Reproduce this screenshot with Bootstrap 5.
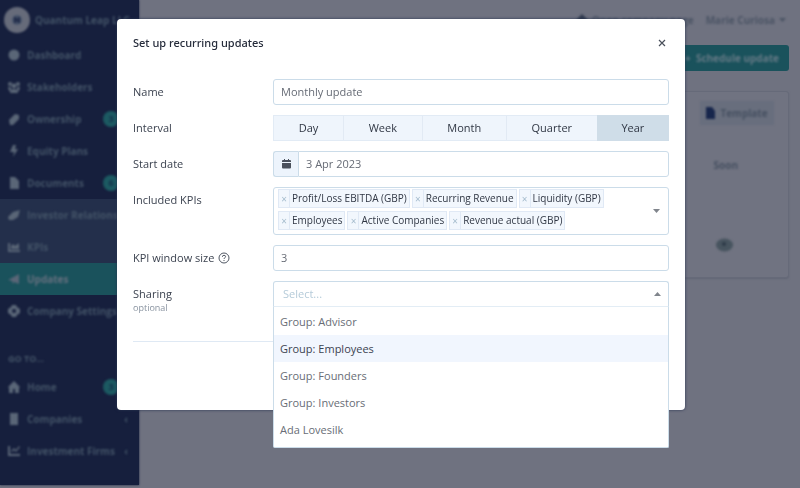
<!DOCTYPE html>
<html lang="en">
<head>
<meta charset="utf-8">
<meta name="viewport" content="width=device-width, initial-scale=1">
<title>Set up recurring updates</title>
<link href="https://cdn.jsdelivr.net/npm/bootstrap@5.3.0/dist/css/bootstrap.min.css" rel="stylesheet">
<style>
body{font-family:"Open Sans","Noto Sans",sans-serif;font-size:11px;line-height:16px;color:#3c4350;background:#6f7280;overflow:hidden}
svg{display:block;flex:none}
/* dimmed application behind the dialog */
.app-shell{min-height:100vh;font-size:10px;font-weight:700;padding-bottom:3px}
.side{width:139px;flex:none;background:#161f3d;color:#435367;box-shadow:0 0 2px #161f3d}
.side-brand{height:39px;padding-left:4px;gap:5px;white-space:nowrap}
.brand-logo{width:26px;height:26px;background:#666b7a}
.side-link{height:32px;padding-left:8px;gap:7px;color:#435367;text-decoration:none;white-space:nowrap}
.side-link span,.side-brand span,.side-head,.soft{filter:blur(1px)}
.side-link svg{width:12px;height:12px;fill:#5a6677;filter:blur(1px)}
.side-group{background:#232f4b}
.side-link.current{background:#1a525c;color:#66707f}
.side-link .pill{width:16px;height:16px;margin-left:auto;margin-right:20px;background:#1c5a62;color:#15304a;font-size:9px;text-align:center}
.side-link .caret{margin-left:auto;margin-right:11px}
.side-head{height:26px;padding:6px 8px 0;font-size:9px;margin-top:18px}
.main-pane{padding-right:11px}
.top-row{height:40px;padding-right:3px;gap:12px;color:#4b5464}
.go-btn{height:26px;width:130px;margin-top:5px;padding:0 10px 0 0;background:#1a525c;color:#667a86;border:0;border-radius:3px;font-size:10px;font-weight:700}
.list-box{width:190px;height:187px;margin-top:20px;border:1px solid #666a79;border-radius:3px;background:#707381;padding:9px 14px;color:#465061;box-shadow:0 1px 2px #626675}
.tpl-btn{width:74px;height:24px;border:0;background:#686e7d;color:#465061;font-size:10px;font-weight:700;gap:5px}
.when{margin:32px 36px 0 0}
.view-eye{margin:auto 41px 16px 0}
/* dialog */
.dlg-wrap{padding:19px 115px 0 117px}
.dlg{max-width:568px;background:#fff;border-radius:4px;box-shadow:0 0 3px #2a3350;min-height:391px}
.dlg-top{height:48px;padding:0 16px;color:#252b3a}
.dlg-top h1{font-family:"Noto Sans",sans-serif;font-size:11px;line-height:16px;font-weight:500}
.x-btn{border:0;background:none;padding:4px;margin-right:-1px}
.dlg-form{padding:12px 16px 0;gap:10px}
.f-label{width:140px;flex:none;padding-top:5px;color:#3c4350}
.f-ctl{flex:1 1 0;min-width:0}
.box{width:100%;height:26px;border:1px solid #cbdce9;border-radius:3px;background:#fff;color:#666b75;padding:0 7px 2px;font-size:11px;outline:0}
.box::placeholder{color:#b5cbd9;opacity:1}
.seg{height:26px;background:#eff5fc;border:1px solid #e2ebf5}
.seg button{flex:1 1 auto;border:0;border-right:1px solid #e2eaf4;background:none;color:#303744;padding:0}
.seg button.on{background:#cfdde8;border:0;margin:-1px}
.cal{width:25px;background:#edf4fc;border:1px solid #cbdce9;border-radius:3px 0 0 3px;border-right:0}
.cal+.box{border-radius:0 3px 3px 0}
.tags{min-height:48px;border:1px solid #cbdce9;border-radius:3px;padding:1px 4px;position:relative}
.tag-list{gap:3px 2px;padding-right:24px}
.kpi{height:19px;border:1px solid #e0e9f5;background:#f2f7fd;font-size:10px;line-height:17px;color:#303744;padding-right:2px}
.kpi button{width:11px;height:17px;border:0;border-right:1px solid #e0e9f5;background:none;color:#a5bccd;font-size:10px;line-height:16px;padding:0;margin-right:2px}
.arrow{position:absolute;right:8px;top:50%;margin-top:-2px}
.opt-note{font-size:9px;line-height:12px;color:#8993a0}
.pick{position:relative}
.pick .box{padding-left:9px;border-radius:3px 3px 0 0;border-bottom-color:#e3edf5}
.menu{position:absolute;top:26px;left:0;right:0;background:#fff;border:1px solid #cbdce9;border-top:0;padding:1px 0 4px;border-radius:0 0 2px 2px;list-style:none;margin:0}
.menu li{height:27px;line-height:27px;padding-left:6px;color:#686d76}
.menu li.over{background:#f1f6fe;color:#3c4350}
.rule{border-top:1px solid #dfe9f4;margin-top:17px}
</style>
</head>
<body>
<div class="app-shell d-flex" aria-hidden="true">
  <nav class="side">
    <div class="side-brand d-flex align-items-center">
      <div class="brand-logo soft rounded-circle d-flex align-items-center justify-content-center"><svg width="12" height="12" viewBox="0 0 12 12"><circle cx="6" cy="6" r="5" fill="#46536a"/><path d="M4 3v6M4 4l4 4M8 3v6" stroke="#202b49" stroke-width="2"/></svg></div>
      <span>Quantum Leap LLC</span>
    </div>
    <a href="#" class="side-link d-flex align-items-center"><svg viewBox="0 0 12 12"><circle cx="6" cy="6" r="5.5"/></svg><span>Dashboard</span></a>
    <a href="#" class="side-link d-flex align-items-center"><svg viewBox="0 0 12 12"><circle cx="2" cy="3" r="2"/><circle cx="10" cy="3" r="2"/><circle cx="6" cy="5" r="2.4"/><path d="M0 6h3v4H1zM9 6h3l-1 4H9zM2 12q0-4 4-4t4 4z"/></svg><span>Stakeholders</span></a>
    <a href="#" class="side-link d-flex align-items-center"><svg viewBox="0 0 12 12"><path d="M1 7l6-6 4 1v4l-6 6H2z"/></svg><span>Ownership</span><span class="pill rounded-circle">3</span></a>
    <a href="#" class="side-link d-flex align-items-center"><svg viewBox="0 0 12 12"><path d="M5 0h3L7 4h3L5 12l1-5H2z"/></svg><span>Equity Plans</span></a>
    <a href="#" class="side-link d-flex align-items-center"><svg viewBox="0 0 12 12"><path d="M2 0h5l4 4v8H2z"/></svg><span>Documents</span><span class="pill rounded-circle">6</span></a>
    <div class="side-group">
      <a href="#" class="side-link d-flex align-items-center"><svg viewBox="0 0 12 12"><path d="M0 8l5-5 7-2-2 7-5 3H1z"/></svg><span>Investor Relations</span></a>
      <a href="#" class="side-link d-flex align-items-center"><svg viewBox="0 0 12 12"><path d="M0 2h2v7h10v2H0zM3 8V5l2-2 2 2 4-3v6z"/></svg><span>KPIs</span></a>
    </div>
    <a href="#" class="side-link current d-flex align-items-center"><svg viewBox="0 0 12 12"><path d="M0 7L11 1v10L6 9l-1 2-1-3z"/></svg><span>Updates</span></a>
    <a href="#" class="side-link d-flex align-items-center"><svg viewBox="0 0 12 12"><path fill-rule="evenodd" d="M4 0h4l1 2 3 2v4l-3 2-1 2H4l-1-2-3-2V4l3-2zM6 4a2 2 0 1 0 .1 0z"/></svg><span>Company Settings</span></a>
    <div class="side-head">GO TO...</div>
    <a href="#" class="side-link d-flex align-items-center"><svg viewBox="0 0 12 12"><path d="M6 0l6 6-1 1v5H7V8H5v4H1V7L0 6z"/></svg><span>Home</span><span class="pill rounded-circle">3</span></a>
    <a href="#" class="side-link d-flex align-items-center"><svg viewBox="0 0 12 12"><path d="M2 0h8v12H2z"/></svg><span>Companies</span><span class="caret">‹</span></a>
    <a href="#" class="side-link d-flex align-items-center"><svg viewBox="0 0 12 12"><path d="M0 1h2v8h10v2H0zM3 6l3-3 2 2 3-4 1 1-4 5-2-2-2 2z"/></svg><span>Investment Firms</span><span class="caret">‹</span></a>
  </nav>
  <main class="main-pane flex-fill d-flex flex-column align-items-end">
    <div class="top-row d-flex align-items-center soft">
      <div class="d-flex align-items-center gap-1"><svg width="12" height="12" viewBox="0 0 12 12"><path d="M6 0l6 6-1 1v5H1V7L0 6z" fill="#303a4e"/></svg><span>Open company page</span></div>
      <div class="d-flex align-items-center gap-1"><span>Marie Curiosa</span><svg width="7" height="4" viewBox="0 0 7 4"><path d="M0 0h7L3.500 4z" fill="#4b5464"/></svg></div>
    </div>
    <button type="button" class="go-btn text-end" tabindex="-1"><span class="soft d-inline-block">+&nbsp; Schedule update</span></button>
    <div class="list-box d-flex flex-column align-items-end">
      <button type="button" class="tpl-btn soft d-flex align-items-center justify-content-center p-0" tabindex="-1"><svg width="9" height="12" viewBox="0 0 9 12"><path d="M0 0h6l3 4v8H0z" fill="#17264c"/></svg>Template</button>
      <div class="soft when">Soon</div>
      <svg class="soft view-eye" width="17" height="14" viewBox="0 0 17 14"><ellipse cx="8.500" cy="7" rx="8.500" ry="6.500" fill="#47545f"/><circle cx="8" cy="6" r="2" fill="#2d3947"/></svg>
    </div>
  </main>
</div>

<div class="dlg-wrap position-fixed top-0 start-0 end-0">
  <div class="dlg" role="dialog" aria-modal="true" aria-labelledby="dlg-title">
    <div class="dlg-top d-flex align-items-center justify-content-between">
      <h1 id="dlg-title" class="m-0">Set up recurring updates</h1>
      <button type="button" class="x-btn" aria-label="Close"><svg width="8" height="8" viewBox="0 0 8 8"><path d="M1 1l6 6M7 1L1 7" stroke="#4a505b" stroke-width="1.200"/></svg></button>
    </div>
    <form class="dlg-form d-flex flex-column">
      <div class="d-flex">
        <label class="f-label" for="name">Name</label>
        <div class="f-ctl"><input class="box" id="name" type="text" value="Monthly update"></div>
      </div>
      <div class="d-flex">
        <div class="f-label" id="interval">Interval</div>
        <div class="f-ctl seg d-flex" role="group" aria-labelledby="interval">
          <button type="button">Day</button><button type="button">Week</button><button type="button">Month</button><button type="button">Quarter</button><button type="button" class="on" aria-pressed="true">Year</button>
        </div>
      </div>
      <div class="d-flex">
        <label class="f-label" for="start">Start date</label>
        <div class="f-ctl d-flex">
          <div class="cal d-flex align-items-center justify-content-center flex-shrink-0"><svg width="9" height="10" viewBox="0 0 9 10"><path d="M2 0h1v1h3V0h1v1h1q1 0 1 1v1H0V2q0-1 1-1h1zM0 4h9v4.500q0 1-1 1H1q-1 0-1-1z" fill="#4a505b"/></svg></div>
          <input class="box" id="start" type="text" value="3 Apr 2023">
        </div>
      </div>
      <div class="d-flex">
        <div class="f-label">Included KPIs</div>
        <div class="f-ctl tags">
          <div class="tag-list d-flex flex-wrap">
            <div class="kpi d-flex"><button type="button" aria-label="Remove">×</button>Profit/Loss EBITDA (GBP)</div>
            <div class="kpi d-flex"><button type="button" aria-label="Remove">×</button>Recurring Revenue</div>
            <div class="kpi d-flex"><button type="button" aria-label="Remove">×</button>Liquidity (GBP)</div>
            <div class="kpi d-flex"><button type="button" aria-label="Remove">×</button>Employees</div>
            <div class="kpi d-flex"><button type="button" aria-label="Remove">×</button>Active Companies</div>
            <div class="kpi d-flex"><button type="button" aria-label="Remove">×</button>Revenue actual (GBP)</div>
          </div>
          <svg class="arrow" width="7" height="4" viewBox="0 0 7 4"><path d="M0 0h7L3.500 4z" fill="#80858c"/></svg>
        </div>
      </div>
      <div class="d-flex">
        <label class="f-label d-flex align-items-center gap-1 p-0" for="window">KPI window size
          <svg width="12" height="12" viewBox="0 0 12 12" fill="none" stroke="#505763"><circle cx="6" cy="6" r="5"/><path d="M4.400 4.800q0-1.500 1.600-1.500t1.600 1.300q0 .8-.8 1.200T6 7M6 8v1"/></svg></label>
        <div class="f-ctl"><input class="box" id="window" type="text" value="3"></div>
      </div>
      <div class="d-flex align-items-start">
        <label class="f-label" for="share">Sharing<small class="opt-note d-block">optional</small></label>
        <div class="f-ctl pick">
          <input class="box d-block" id="share" type="text" placeholder="Select..." role="combobox" aria-expanded="true" aria-controls="share-list">
          <svg class="arrow" width="7" height="4" viewBox="0 0 7 4"><path d="M0 4h7L3.500 0z" fill="#80858c"/></svg>
          <ul class="menu" id="share-list" role="listbox">
            <li role="option">Group: Advisor</li>
            <li role="option" class="over" aria-selected="true">Group: Employees</li>
            <li role="option">Group: Founders</li>
            <li role="option">Group: Investors</li>
            <li role="option">Ada Lovesilk</li>
          </ul>
        </div>
      </div>
      <div class="rule"></div>
    </form>
  </div>
</div>
<script src="https://cdn.jsdelivr.net/npm/bootstrap@5.3.0/dist/js/bootstrap.bundle.min.js"></script>
</body>
</html>
